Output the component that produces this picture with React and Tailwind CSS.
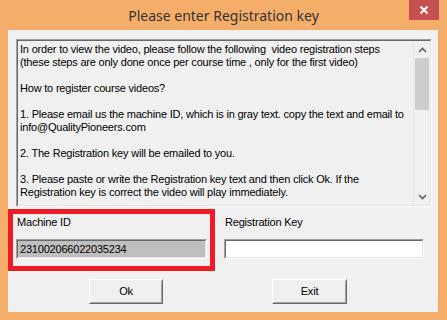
import React from "react";

const lines = [
  "In order to view the video, please follow the following\u00a0 video registration steps",
  "(these steps are only done once per course time , only for the first video)",
  "",
  "How to register course videos?",
  "",
  "1. Please email us the machine ID, which is in gray text. copy the text and email to",
  "info@QualityPioneers.com",
  "",
  "2. The Registration key will be emailed to you.",
  "",
  "3. Please paste or write the Registration key text and then click Ok. If the",
  "Registration key is correct the video will play immediately.",
];

const sunken =
  "border-t-[#a0a0a0] border-l-[#a0a0a0] border-b-white border-r-white";

function Button({ children, w }) {
  return (
    <div
      className={`${w} h-[25px] border border-t-white border-l-white border-r-[#696969] border-b-[#696969] bg-[#f0f0f0]`}
    >
      <div className="w-full h-full border border-t-[#f0f0f0] border-l-[#f0f0f0] border-r-[#a0a0a0] border-b-[#a0a0a0] flex items-center justify-center text-[11px] text-black">
        {children}
      </div>
    </div>
  );
}

export default function App() {
  return (
    <div
      className="w-[447px] h-[320px] bg-[#f4ae6a] flex flex-col relative overflow-hidden tracking-[-0.2px]"
      style={{ fontFamily: '"Liberation Sans", Arial, sans-serif' }}
    >
      {/* title bar */}
      <div className="h-[30px] flex relative">
        <div
          className="flex-1 flex items-center justify-center pt-[1px] text-[14px] tracking-normal text-[#333333]"
          style={{ fontFamily: '"Noto Sans", "Open Sans", sans-serif' }}
        >
          Please enter Registration key
        </div>
        <div className="absolute left-[409px] top-0 w-[30px] h-[20px] bg-[#c75050] flex items-center justify-center">
          <svg width="10" height="10" viewBox="0 0 10 10">
            <path d="M1.5 1.5 L8.5 8.5 M8.5 1.5 L1.5 8.5" stroke="white" strokeWidth="1.8" />
          </svg>
        </div>
      </div>

      {/* client */}
      <div className="ml-[8px] mr-[9px] h-[282px] bg-[#f0f0f0] flex flex-col pl-[8px] pt-[9px] pr-[6px]">
        {/* textarea */}
        <div className={`w-[416px] h-[168px] border ${sunken} flex`}>
          <div className="flex-1 flex border border-t-[#696969] border-l-[#696969] border-b-[#e3e3e3] border-r-[#e3e3e3] bg-[#f0f0f0]">
            <div className="flex-1 pl-[2px] pt-[2px] text-[11px] leading-[13px] text-black">
              {lines.map((l, i) => (
                <div key={i} className="h-[13px] whitespace-pre">
                  {l}
                </div>
              ))}
            </div>
            {/* scrollbar */}
            <div className="w-[17px] flex flex-col bg-[#f0f0f0] border-l border-l-[#e8e8e8]">
              <div className="h-[17px] flex items-center justify-center">
                <svg width="9" height="6" viewBox="0 0 9 6">
                  <path d="M1 5 L4.5 1.5 L8 5" stroke="#606060" strokeWidth="1.6" fill="none" />
                </svg>
              </div>
              <div className="mx-[1px] h-[52px] bg-[#cdcdcd]" />
              <div className="flex-1" />
              <div className="h-[17px] flex items-center justify-center">
                <svg width="9" height="6" viewBox="0 0 9 6">
                  <path d="M1 1 L4.5 4.5 L8 1" stroke="#606060" strokeWidth="1.6" fill="none" />
                </svg>
              </div>
            </div>
          </div>
        </div>

        {/* labels + inputs */}
        <div className="flex mt-[9px]">
          <div className="w-[191px] flex flex-col">
            <div className="h-[13px] pl-[1px] text-[11px] leading-[13px] text-black">Machine ID</div>
            <div className={`mt-[10px] h-[20px] border ${sunken}`}>
              <div className="w-full h-full border border-t-[#696969] border-l-[#696969] border-b-[#e3e3e3] border-r-[#e3e3e3] bg-[#bfbfbf] text-[11px] leading-[16px] pl-[2px] text-black">
                231002066022035234
              </div>
            </div>
          </div>
          <div className="w-[200px] ml-[17px] flex flex-col">
            <div className="h-[13px] pl-[1px] text-[11px] leading-[13px] text-black">Registration Key</div>
            <div className={`mt-[10px] h-[20px] border ${sunken}`}>
              <div className="w-full h-full border border-t-[#696969] border-l-[#696969] border-b-[#e3e3e3] border-r-[#e3e3e3] bg-white" />
            </div>
          </div>
        </div>

        {/* buttons */}
        <div className="flex mt-[20px]">
          <div className="ml-[73px]">
            <Button w="w-[74px]">Ok</Button>
          </div>
          <div className="ml-[109px]">
            <Button w="w-[75px]">Exit</Button>
          </div>
        </div>
      </div>

      {/* red annotation */}
      <div className="absolute left-[8px] top-[209px] w-[207px] h-[62px] border-[5px] border-[#ed1c24] pointer-events-none" />
    </div>
  );
}
